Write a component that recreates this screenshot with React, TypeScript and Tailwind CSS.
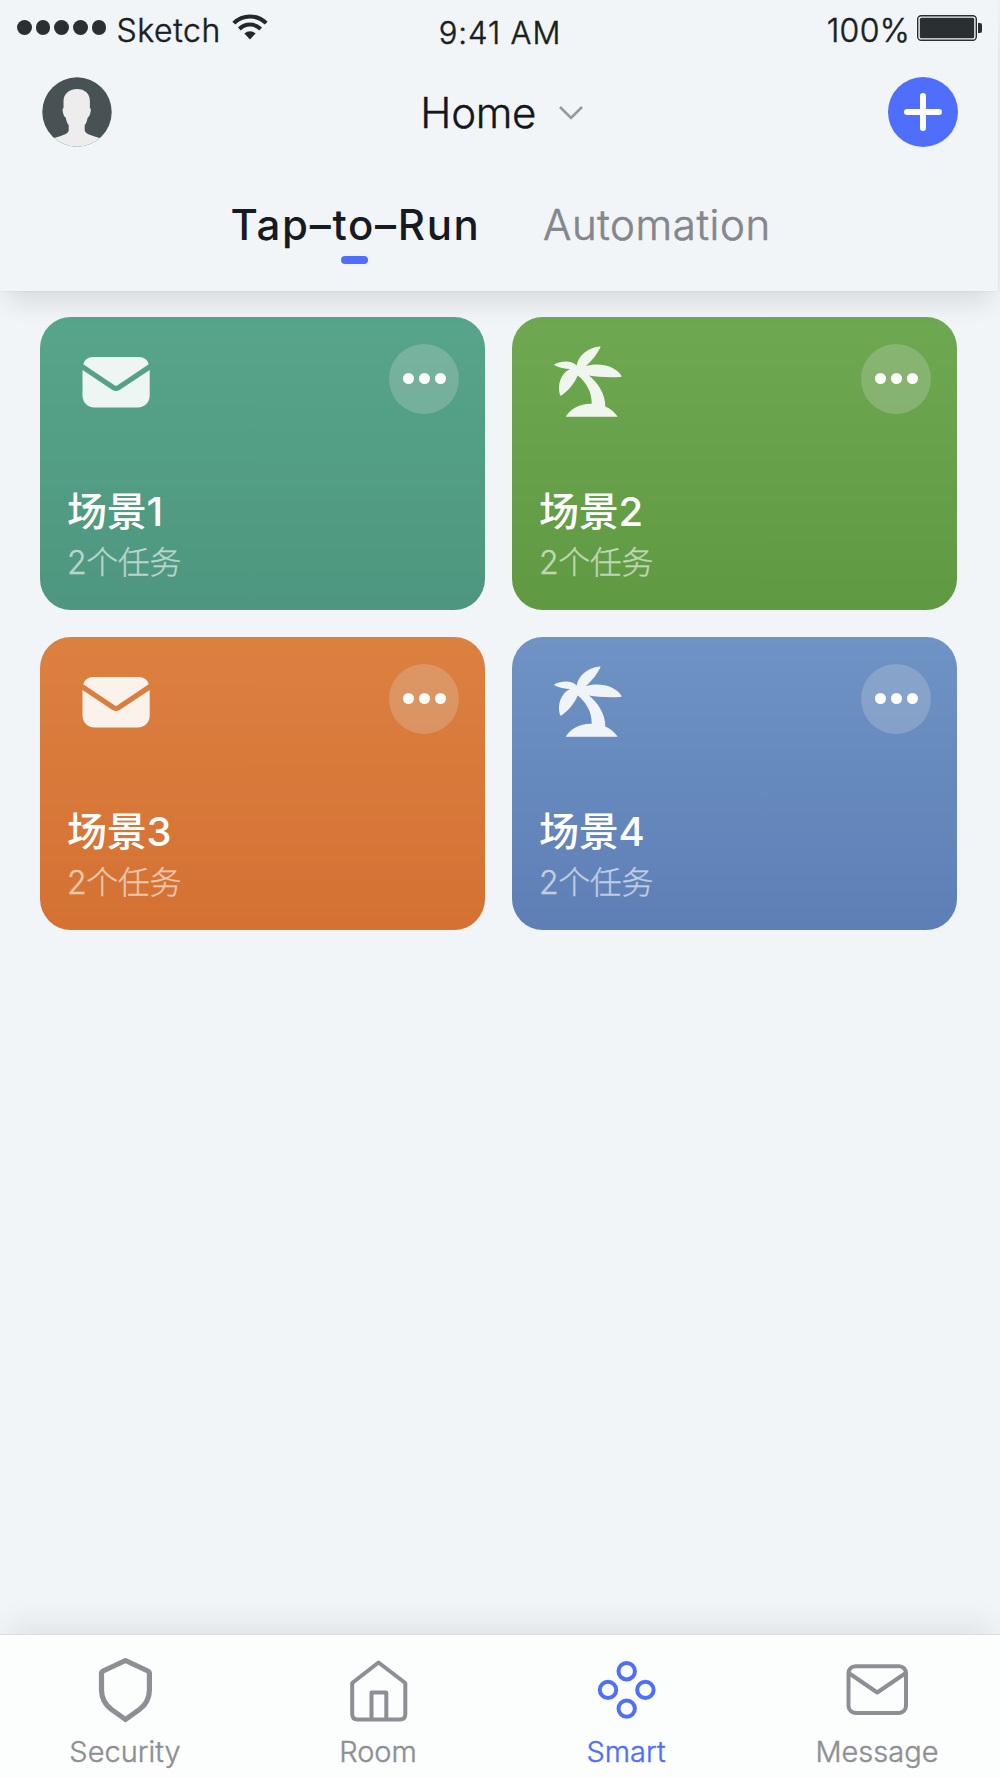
import type { ReactNode } from 'react';

type Scene = {
  name: string;
  icon: 'mail' | 'palm';
  background: string;
};

const scenes: Scene[] = [
  { name: '场景1', icon: 'mail', background: 'bg-linear-to-b from-[#57a58b] to-[#4e967f]' },
  { name: '场景2', icon: 'palm', background: 'bg-linear-to-b from-[#6ea851] to-[#5f9a42]' },
  { name: '场景3', icon: 'mail', background: 'bg-linear-to-b from-[#dc8040] to-[#d47133]' },
  { name: '场景4', icon: 'palm', background: 'bg-linear-to-b from-[#6e93c4] to-[#5e7fb6]' },
];

function StatusBar() {
  return (
    <div className="flex h-[60px] items-start justify-between pl-[17px] pr-[15px] font-light text-[#1a1e21] [-webkit-text-stroke:0.5px]">
      <div className="flex w-[400px] items-start">
        <div className="mt-[20px] flex gap-[4px]">
          {[0, 1, 2, 3, 4].map((i) => (
            <span key={i} className="h-[15px] w-[14.7px] rounded-full bg-[#2a2f31]" />
          ))}
        </div>
        <span className="ml-[10px] mt-[11px] text-[32px] leading-[40px] tracking-[0.6px]">Sketch</span>
        <svg className="ml-[11px] mt-[14px]" width="36" height="26" viewBox="0 0 36 26" fill="none" stroke="#23282a">
          <path d="M1.8 9.2a23 23 0 0 1 32.4 0" strokeWidth="4" />
          <path d="M7.4 15a15 15 0 0 1 21.2 0" strokeWidth="4" />
          <path d="M12.4 19.6a8 8 0 0 1 11.2 0L18 25.4Z" fill="#23282a" stroke="none" />
        </svg>
      </div>
      <span className="mt-[13px] whitespace-nowrap text-[31px] leading-[40px] tracking-[0.9px]">9:41 AM</span>
      <div className="flex w-[400px] items-start justify-end">
        <span className="mt-[11px] text-[32px] leading-[40px] tracking-[0.3px]">100%</span>
        <svg className="ml-[7px] mt-[15px]" width="66" height="26" viewBox="0 0 66 26">
          <rect x="0.7" y="0.7" width="58.6" height="24.6" rx="3.5" fill="none" stroke="#2a2f31" strokeWidth="1.4" />
          <rect x="2.8" y="2.8" width="54.4" height="20.4" rx="1.5" fill="#2a2f31" />
          <path d="M61 8h2a2 2 0 0 1 2 2v6a2 2 0 0 1-2 2h-2Z" fill="#2a2f31" />
        </svg>
      </div>
    </div>
  );
}

function Avatar() {
  return (
    <svg width="70" height="70" viewBox="0 0 70 70">
      <clipPath id="avatar">
        <circle cx="35" cy="35" r="34.7" />
      </clipPath>
      <g clipPath="url(#avatar)">
        <rect width="70" height="70" fill="#485154" />
        <path
          d="M35 12C27 12 21.5 17 21.5 24v7c-1.3.8-1 2.5-.5 4.5.5 2.5 1 4 2.8 5.2.5 3.3 1.4 5.6 2.9 7.3v5c0 3.5-4.2 5-14.7 8v11h46V61c-10.5-3-15.3-4.5-15.3-8v-5c1.5-1.7 2.4-4 2.9-7.3 1.8-1.2 2.3-2.7 2.8-5.2.5-2 .8-3.7-.5-4.5v-7C48 17 43 12 35 12Z"
          fill="#ededed"
        />
      </g>
    </svg>
  );
}

function Header() {
  return (
    <header className="relative h-[290.5px] w-[998px] shrink-0 bg-[#f1f5f8] shadow-[0_20px_24px_-8px_rgba(20,10,20,0.105),0_0_3px_rgba(0,0,0,0.08)]">
      <StatusBar />
      <div className="flex h-[105px] items-start justify-between pl-[42px] pr-[40.5px] pt-[17px]">
        <Avatar />
        <div className="flex items-center pl-[5px]">
          <h1 className="pt-[1px] text-[42px] font-light leading-[70px] tracking-[-0.3px] text-[#14161e] [-webkit-text-stroke:0.4px]">
            Home
          </h1>
          <svg className="ml-[22px]" width="26" height="16" viewBox="0 0 26 16" fill="none">
            <path d="M2 2 13 13 24 2" stroke="#98999b" strokeWidth="2.6" />
          </svg>
        </div>
        <button className="flex h-[70px] w-[70px] items-center justify-center rounded-full bg-[#506efc]">
          <svg width="38" height="38" viewBox="0 0 38 38">
            <path d="M19 3v32M3 19h32" stroke="#fff" strokeWidth="6" strokeLinecap="round" />
          </svg>
        </button>
      </div>
      <div className="flex items-start pl-[231px] pt-[35px]">
        <div className="flex w-[247px] flex-col items-center">
          <span className="whitespace-nowrap pl-[2px] text-[42px] font-medium leading-[50px] tracking-[1.7px] text-[#171a21]">
            Tap–to–Run
          </span>
          <span className="mt-[6px] h-[8px] w-[27px] rounded-full bg-[#506efc]" />
        </div>
        <span className="ml-[65px] text-[42px] font-light leading-[50px] tracking-[0.6px] text-[#84868c] [-webkit-text-stroke:0.6px]">
          Automation
        </span>
      </div>
    </header>
  );
}

function MailIcon() {
  return (
    <svg width="68" height="74" viewBox="0 0 68 74" fill="#fff" fillOpacity="0.9">
      <path d="M1.3 20.3C2.5 16.2 6 13.1 11 13.1h46c5 0 8.5 3.1 9.7 7.2L35.5 41.2q-1.5 1-3 0Z" />
      <path d="M.5 26.1 30.5 46q3.5 2 7 0L67.7 26.1V51.5c0 7-5 11.9-12 11.9H12.5C5.5 63.4.5 58.5.5 51.5Z" />
    </svg>
  );
}

function PalmIcon() {
  return (
    <svg width="68" height="74" viewBox="0 0 68 74" fill="#fff" fillOpacity="0.9">
      <path
        transform="translate(0 1)"
        d="M22.7 20.5C23.5 12 33 2.5 45.6 1.4C47 1.3 46.5 2.5 46 3.3C42 11 36 18 31.5 21C45 17 61 20.5 67.3 30.5C68 31.8 67 32 66 32C54 32.7 43 31.8 35 30.5C44 38 51.5 49 51.3 61.5C56 63.5 60.5 67 63.7 71.7H11.7C17 63.5 26 58.5 37.7 58.8C38 47 32 37 23.7 30.5C21 37.5 14 46 8 50C6.5 51 6 50.5 5.7 49C3.5 39 6.5 29 16 24C11 24 5 22.7 1 20.5C0 20 0 19.5 1 19C7 16 18 15 22.7 20.5Z"
      />
    </svg>
  );
}

function SceneCard({ scene }: { scene: Scene }) {
  return (
    <div className={`flex h-[293px] flex-col rounded-[31px] pl-[27px] pr-[26px] pt-[26.5px] ${scene.background}`}>
      <div className="flex items-start justify-between pl-[15px]">
        {scene.icon === 'mail' ? <MailIcon /> : <PalmIcon />}
        <button className="flex h-[70px] w-[70px] items-center justify-center gap-[5px] rounded-full bg-[#e6e6e6]/23">
          <span className="h-[11px] w-[11px] rounded-full bg-white" />
          <span className="h-[11px] w-[11px] rounded-full bg-white" />
          <span className="h-[11px] w-[11px] rounded-full bg-white" />
        </button>
      </div>
      <h2 className="mt-[67.5px] text-[40px] font-medium leading-[54px] tracking-[-0.3px] text-white">{scene.name}</h2>
      <p className="text-[32px] font-light leading-[48px] tracking-[-0.4px] text-[#fff] opacity-60 [-webkit-text-stroke:0.3px]">2个任务</p>
    </div>
  );
}

function TabItem({ label, active, children }: { label: string; active?: boolean; children: ReactNode }) {
  return (
    <button className={`flex flex-col items-center pt-[17px] ${active ? 'text-[#506efc]' : 'text-[#8e8f94]'}`}>
      <svg width="76" height="76" viewBox="0 0 76 76" fill="none" stroke="currentColor" strokeLinejoin="round">
        {children}
      </svg>
      <span className="mt-[4px] text-[29px] font-light leading-[40px] [-webkit-text-stroke:0.4px]">{label}</span>
    </button>
  );
}

function TabBar() {
  return (
    <nav className="relative grid h-[144px] shrink-0 grid-cols-[250px_256px_240px_262px] border-t border-[#dddee0] bg-[#fcfdfd] shadow-[0_-18px_30px_-8px_rgba(0,0,0,0.08)]">
      <TabItem label="Security">
        <path
          d="M38.5 8.5 60.8 19q1.6.8 1.6 2.6V38c0 9-4 15-10 19.5L38.5 67.5 24.5 57.5C18.5 53 14.5 47 14.5 38V21.6q0-1.8 1.6-2.6Z"
          strokeWidth="5.2"
        />
      </TabItem>
      <TabItem label="Room">
        <path d="M38.5 10.5 65.3 31v31c0 3.5-2 5.5-5.5 5.5H17.7c-3.5 0-5.5-2-5.5-5.5V31Z" strokeWidth="4" />
        <path d="M31.5 67.5V40.5h14.8v27" strokeWidth="4" />
      </TabItem>
      <TabItem label="Smart" active>
        <circle cx="38.7" cy="19.2" r="8.2" strokeWidth="4" />
        <circle cx="20" cy="37.9" r="8.2" strokeWidth="4" />
        <circle cx="57.4" cy="37.9" r="8.2" strokeWidth="4" />
        <circle cx="38.7" cy="56.6" r="8.2" strokeWidth="4" />
      </TabItem>
      <TabItem label="Message">
        <rect x="9.5" y="14.2" width="57.5" height="46.8" rx="7" strokeWidth="4" />
        <path d="M10.5 21.5 38.2 40.5 66 21.5" strokeWidth="4" />
      </TabItem>
    </nav>
  );
}

export default function App() {
  return (
    <div className="flex h-[1778px] w-[1000px] flex-col overflow-hidden bg-[#f1f5f8] font-[Inter,'Noto_Sans_CJK_SC',sans-serif]">
      <Header />
      <main className="grid flex-1 grid-cols-[445px_445px] content-start gap-x-[27px] gap-y-[27px] pl-[40px] pt-[26.5px]">
        {scenes.map((scene) => (
          <SceneCard key={scene.name} scene={scene} />
        ))}
      </main>
      <TabBar />
    </div>
  );
}
